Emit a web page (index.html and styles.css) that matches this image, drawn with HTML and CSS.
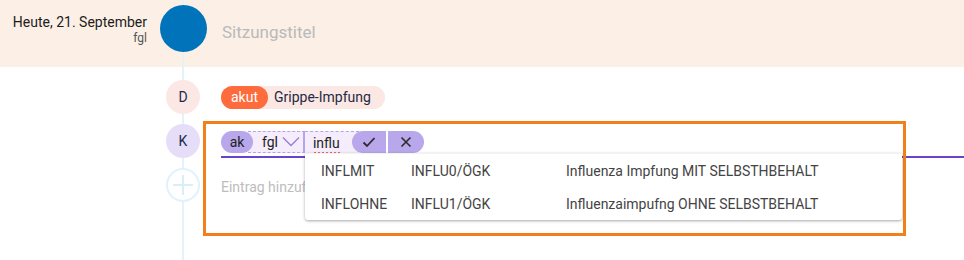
FILE: index.html
```html
<!DOCTYPE html>
<html lang="de">
<head>
	<meta charset="UTF-8">
	<title>Sitzung</title>
<link rel="stylesheet" href="styles.css">
</head>
<body>
	<div class='session'>
		<div class='session-meta'>
			<div class='session-date'>Heute, 21. September</div>
			<div class='session-user'>fgl</div>
		</div>
		<div class='session-dot'></div>
		<div class='session-title'>Sitzungstitel</div>
	</div>

	<div class='timeline'>
		<div class='entry'>
			<div class='entry-badge badge-d'>D</div>
			<div class='entry-body'>
				<span class='chip'><span class='chip-tag'>akut</span>Grippe-Impfung</span>
			</div>
		</div>

		<div class='entry'>
			<div class='entry-badge badge-k'>K</div>
			<div class='entry-body editor'>
				<div class='editor-chips'>
					<span class='tok tok-type'>ak</span>
					<span class='tok tok-user'>fgl
						<svg class='chevron' width='18' height='11' viewBox='0 0 18 11'><path d='M1 1.5 L9 9.5 L17 1.5' fill='none' stroke='#9b7bd9' stroke-width='1.3'/></svg>
					</span>
					<span class='tok tok-input'><span class='typo'>influ</span></span>
					<span class='tok-btn btn-ok'>
						<svg width='14' height='12' viewBox='0 0 14 12'><path d='M1.5 6.5 L5 10 L12.5 2' fill='none' stroke='#2b2b2b' stroke-width='1.8'/></svg>
					</span>
					<span class='tok-btn btn-cancel'>
						<svg width='12' height='12' viewBox='0 0 12 12'><path d='M1.5 1.5 L10.5 10.5 M10.5 1.5 L1.5 10.5' fill='none' stroke='#2b2b2b' stroke-width='1.6'/></svg>
					</span>
				</div>
				<div class='suggest'>
					<div class='suggest-row'>
						<span class='col-code'>INFLMIT</span>
						<span class='col-tarif'>INFLU0/ÖGK</span>
						<span class='col-text'>Influenza Impfung MIT SELBSTHBEHALT</span>
					</div>
					<div class='suggest-row'>
						<span class='col-code'>INFLOHNE</span>
						<span class='col-tarif'>INFLU1/ÖGK</span>
						<span class='col-text'>Influenzaimpufng OHNE SELBSTBEHALT</span>
					</div>
				</div>
			</div>
		</div>

		<div class='entry'>
			<div class='entry-badge badge-add'>
				<svg width='22' height='22' viewBox='0 0 22 22'><path d='M11 1 V21 M1 11 H21' stroke='#d9eefa' stroke-width='2'/></svg>
			</div>
			<div class='entry-body add-hint'>Eintrag hinzufügen</div>
		</div>

		<!-- Markierung -->
		<div class='focus-frame'></div>
	</div>
</body>
</html>
```

FILE: styles.css
```css
body{
	margin:0;
	font-family: Roboto, "Liberation Sans", sans-serif;
	color:#222;
	background:#fff;
	--line: #e2f3fc;
}
.session{
	display:flex;
	height:67px;
	background: linear-gradient(90deg, transparent 182px, #e9f2f3 182px, #e9f2f3 184px, transparent 184px), #fcf0e6;
}
.session-meta{
	width:160px;
	box-sizing:border-box;
	padding-right:13px;
	padding-top:13px;
	text-align:right;
}
.session-date{
	font-size:14px;
	line-height:18px;
	color:#1c1c1c;
}
.session-user{
	font-size:12px;
	line-height:15px;
	color:#555;
}
.session-dot{
	width:47px;
	height:47px;
	margin-top:5px;
	border-radius:50%;
	background:#0073bb;
}
.session-title{
	margin-left:15px;
	padding-top:22px;
	font-size:17px;
	line-height:20px;
	color:#b9b9b9;
}

.timeline{
	position:relative;
	height:193px;
	box-sizing:border-box;
	padding-top:13px;
	display:flex;
	flex-direction:column;
	gap:10px;
	background: linear-gradient(90deg, transparent 182px, var(--line) 182px, var(--line) 184px, transparent 184px);
}
.entry{
	display:flex;
	align-items:center;
	height:34px;
}
.entry-badge{
	flex:none;
	width:34px;
	height:34px;
	margin-left:166px;
	box-sizing:border-box;
	border-radius:50%;
	display:flex;
	align-items:center;
	justify-content:center;
	font-size:14px;
	color:#1d2b4a;
}
.badge-d{ background:#fbe8e4; }
.badge-k{ background:#e6def9; }
.badge-add{
	background:#fff;
	border:2px solid #e0f2fc;
}
.entry-body{
	margin-left:21px;
	font-size:14px;
}

.chip{
	display:inline-flex;
	align-items:center;
	height:23px;
	padding-right:14px;
	border-radius:12px;
	background:#fbe7e3;
	color:#1f2a44;
}
.chip-tag{
	height:23px;
	line-height:23px;
	padding:0 10px;
	margin-right:6px;
	border-radius:12px;
	background:#fe6b3d;
	color:#fff;
}

.editor{
	position:relative;
	flex:1;
	align-self:flex-start;
	padding-top:7px;
	padding-bottom:3px;
	border-bottom:2px solid #6a44c8;
}
.editor-chips{
	display:flex;
	height:22px;
}
.tok{
	display:flex;
	align-items:center;
	height:22px;
	box-sizing:border-box;
}
.tok-type{
	position:relative;
	z-index:1;
	width:32px;
	justify-content:center;
	border-radius:11px;
	background:#b8a7eb;
	color:#222;
}
.tok-user{
	margin-left:-5px;
	padding-left:14px;
	padding-right:3px;
	gap:4px;
	background:#f5edfc;
	border-top:1px dashed #b9a0e8;
	border-bottom:1px dashed #b9a0e8;
	border-right:2px solid #b8a3ea;
}
.chevron{ margin-top:-1px; }
.tok-input{
	width:54px;
	padding-left:8px;
	background:#f5edfc;
	border-top:1px dashed #b9a0e8;
}
/* Rechtschreib-Markierung */
.typo{
	padding-bottom:4px;
	margin-bottom:-4px;
	background-image: radial-gradient(circle, #e8322f 1px, transparent 1.4px);
	background-size:4px 3px;
	background-repeat:repeat-x;
	background-position:0 100%;
}
.tok-btn{
	display:flex;
	align-items:center;
	justify-content:center;
	height:22px;
	background:#b8a7eb;
}
.btn-ok{
	width:34px;
	margin-left:-7px;
	border-radius:11px 0 0 11px;
}
.btn-cancel{
	width:36px;
	margin-left:2px;
	border-radius:0 11px 11px 0;
}

.suggest{
	position:absolute;
	z-index:2;
	left:84px;
	top:29px;
	width:597px;
	height:66px;
	background:#fff;
	border-top:1px solid #f2f2f2;
	box-shadow:0 1px 3px rgba(0,0,0,.35);
	border-radius:0 0 3px 3px;
}
.suggest-row{
	display:flex;
	height:33px;
	align-items:center;
	padding-left:16px;
	font-size:14px;
	color:#444;
}
.col-code{ width:90px; }
.col-tarif{ width:155px; }

.add-hint{
	color:#bdbdbd;
	margin-top:3px;
}

.focus-frame{
	position:absolute;
	left:203px;
	top:54px;
	width:703px;
	height:115px;
	box-sizing:border-box;
	border:3px solid #f1801a;
	pointer-events:none;
}
```
